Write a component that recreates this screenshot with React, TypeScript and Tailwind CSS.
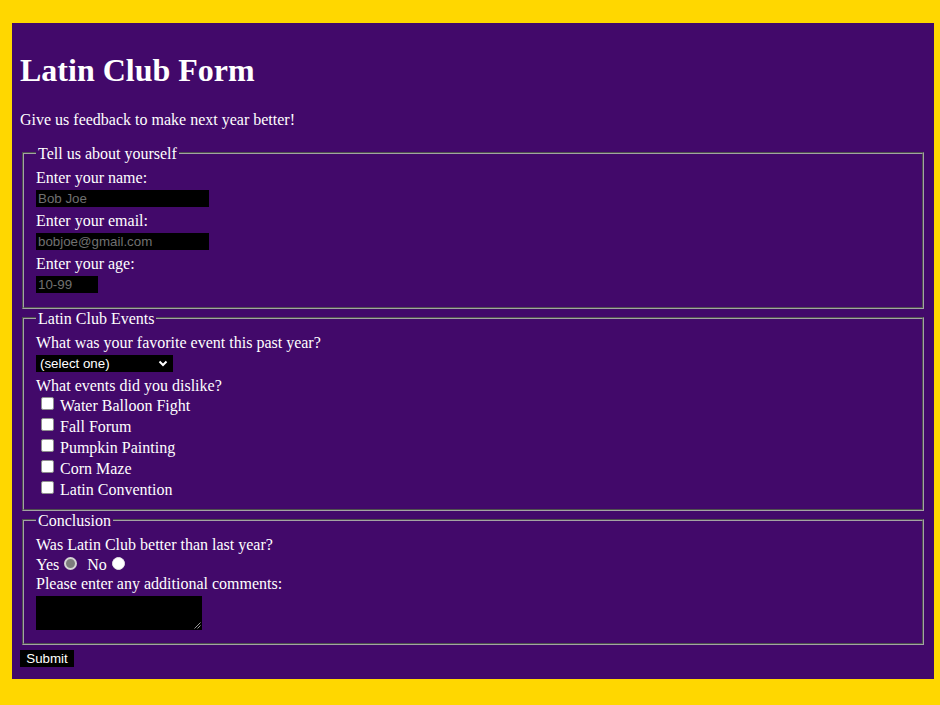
const dislikes = ["Water Balloon Fight", "Fall Forum", "Pumpkin Painting", "Corn Maze", "Latin Convention"];

const serif = "font-['Liberation_Serif',_'Times_New_Roman',_serif]";
const sans = "font-['Liberation_Sans',_Arial,_sans-serif]";

function Line({ children }: { children: React.ReactNode }) {
  return <div className="h-[18px] leading-[20px]">{children}</div>;
}

function Field({ label, placeholder, width }: { label: string; placeholder: string; width: string }) {
  return (
    <>
      <label className="block h-[18px] leading-[20px]">{label}</label>
      <div className="py-[4px]">
        <input
          placeholder={placeholder}
          className={`${sans} ${width} block h-[17px] bg-black px-[2px] text-[13.33px] leading-[15px] text-white outline-none placeholder:text-[#707070]`}
        />
      </div>
    </>
  );
}

function Box({ legend, children, pb = "pb-[10px]" }: { legend: string; children: React.ReactNode; pb?: string }) {
  return (
    <fieldset className={`mx-[2px] border-2 border-[#a3a3a3] [border-style:groove] px-[12px] pt-[6px] ${pb}`}>
      <legend className="h-[18px] px-[2px] leading-[20px]">{legend}</legend>
      {children}
    </fieldset>
  );
}

export default function App() {
  return (
    <div className={`${serif} min-h-screen bg-[#ffd700] pt-[23px] pb-[26px] pl-[12px] pr-[6px] text-[16px] text-white`}>
      <form className="bg-[#42096a] px-[8px] pt-[8px] pb-[8px]">
        <h1 className="my-[21px] text-[32px] font-bold leading-[37px]">Latin Club Form</h1>
        <p className="mb-[16px] h-[18px] leading-[20px]">Give us feedback to make next year better!</p>

        <Box legend="Tell us about yourself">
          <Field label="Enter your name:" placeholder="Bob Joe" width="w-[173px]" />
          <Field label="Enter your email:" placeholder="bobjoe@gmail.com" width="w-[173px]" />
          <Field label="Enter your age:" placeholder="10-99" width="w-[62px]" />
        </Box>

        <Box legend="Latin Club Events">
          <Line>What was your favorite event this past year?</Line>
          <div className="py-[4px]">
            <div className={`${sans} flex h-[17px] w-[137px] items-center justify-between bg-black pl-[4px] pr-[5px] text-[13.33px] text-white`}>
              <span>(select one)</span>
              <svg width="10" height="7" viewBox="0 0 10 7" fill="none" stroke="white" strokeWidth="2">
                <path d="M1.5 1.5 5 5l3.5-3.5" />
              </svg>
            </div>
          </div>
          <Line>What events did you dislike?</Line>
          {dislikes.map((d) => (
            <label key={d} className="flex h-[21px] items-center">
              <input
                type="checkbox"
                className="mb-[2px] ml-[5px] mr-[6px] h-[13px] w-[13px] appearance-none rounded-[2px] border border-[#8f8f8f] bg-white"
              />
              <span className="pt-[2px] leading-[18px]">{d}</span>
            </label>
          ))}
        </Box>

        <Box legend="Conclusion" pb="pb-[9px]">
          <Line>Was Latin Club better than last year?</Line>
          <div className="flex h-[21px] items-center">
            <span className="pt-[2px] leading-[18px]">Yes</span>
            <input
              type="radio"
              name="better"
              className="ml-[5px] mr-[10px] h-[13px] w-[13px] appearance-none rounded-full border-2 border-[#d4d4d4] bg-[#7c7c7c]"
            />
            <span className="pt-[2px] leading-[18px]">No</span>
            <input
              type="radio"
              name="better"
              className="ml-[5px] h-[13px] w-[13px] appearance-none rounded-full border border-[#e8e8e8] bg-white"
            />
          </div>
          <Line>Please enter any additional comments:</Line>
          <div className="pt-[4px] pb-[4px]">
            <div className="relative h-[34px] w-[166px] bg-black">
              <svg className="absolute right-[1px] bottom-[1px]" width="7" height="7" viewBox="0 0 7 7" stroke="#9a9a9a" strokeWidth="1">
                <path d="M6.5 0.5 0.5 6.5M6.5 3.5 3.5 6.5" />
              </svg>
            </div>
          </div>
        </Box>

        <div className="pt-[5px] pb-[4px]">
          <button type="button" className={`${sans} block h-[17px] w-[54px] bg-black text-[13.33px] leading-[15px] text-white`}>
            Submit
          </button>
        </div>
      </form>
    </div>
  );
}
